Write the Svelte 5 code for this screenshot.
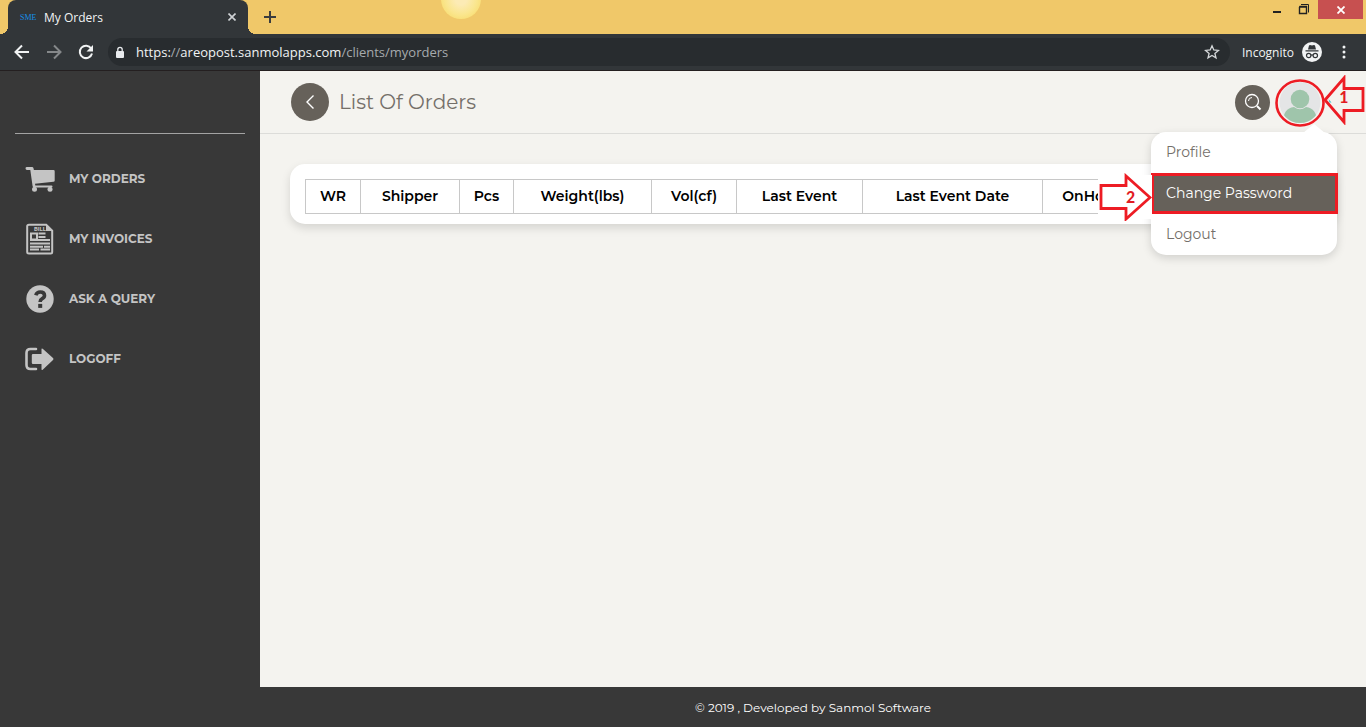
<script>
  const nav = ['MY ORDERS', 'MY INVOICES', 'ASK A QUERY', 'LOGOFF'];
  const columns = [
    { label: 'WR', width: 55 },
    { label: 'Shipper', width: 99 },
    { label: 'Pcs', width: 54 },
    { label: 'Weight(lbs)', width: 138 },
    { label: 'Vol(cf)', width: 85 },
    { label: 'Last Event', width: 126 },
    { label: 'Last Event Date', width: 180 },
    { label: 'OnHold', width: 95 },
    { label: '', width: 0 }
  ];
</script>

<div class="window">
  <header class="browser">
    <div class="tabstrip">
      <div class="sun"></div>
      <div class="tab">
        <span class="favicon">SME</span>
        <span class="tab-title">My Orders</span>
        <button class="plain" aria-label="Close tab">
          <svg width="8" height="8" viewBox="0 0 8 8"><path d="M.5.5l7 7M7.500.5l-7 7" stroke="#d0d3d6" stroke-width="1.600" /></svg>
        </button>
      </div>
      <button class="plain newtab" aria-label="New tab">
        <svg width="12" height="12" viewBox="0 0 12 12"><path d="M6 0v12M0 6h12" stroke="#3a3c3e" stroke-width="2" /></svg>
      </button>
      <div class="controls">
        <button class="plain minimise" aria-label="Minimize"><svg width="10" height="18" viewBox="0 0 10 18"><path d="M1 12h8" stroke="#222" stroke-width="2" /></svg></button>
        <button class="plain restore" aria-label="Restore"><svg width="12" height="18" viewBox="0 0 12 18" fill="none" stroke="#222"><path d="M3 4.500h7.500v8" /><path d="M1.500 7v6.500h7v-7h-7M1 7h8" stroke-width="1.400" /></svg></button>
        <button class="plain close" aria-label="Close"><svg width="8" height="8" viewBox="0 0 8 8"><path d="M.5.5l7 7M7.500.5l-7 7" stroke="#fff" stroke-width="1.800" /></svg></button>
      </div>
    </div>
    <div class="toolbar">
      <button class="plain" aria-label="Back"><svg width="16" height="16" viewBox="0 0 16 16" fill="none" stroke="#f1f3f4" stroke-width="2"><path d="M15 8H2M8 1.500L1.500 8L8 14.500" /></svg></button>
      <button class="plain" aria-label="Forward"><svg width="16" height="16" viewBox="0 0 16 16" fill="none" stroke="#85888a" stroke-width="2"><path d="M1 8h13M8 1.500L14.500 8L8 14.500" /></svg></button>
      <button class="plain" aria-label="Reload"><svg width="16" height="16" viewBox="0 0 16 16"><path d="M13.200 4.500A6.200 6.200 0 1 0 14 9.500" fill="none" stroke="#f1f3f4" stroke-width="2" /><path d="M15 1v6.500H8.500z" fill="#f1f3f4" /></svg></button>
      <div class="omnibox">
        <svg width="10" height="13" viewBox="0 0 10 13"><rect x="1" y="5" width="8" height="7" rx="1" fill="#e8eaed" /><path d="M2.800 5.500V3.500a2.200 2.200 0 0 1 4.400 0v2" fill="none" stroke="#e8eaed" stroke-width="1.300" /></svg>
        <span class="url">https:<span class="dim">//</span>areopost.sanmolapps.com<span class="dim">/clients/myorders</span></span>
        <button class="plain" aria-label="Bookmark"><svg width="16" height="16" viewBox="0 0 16 16"><path d="M8 1.800l1.800 4.200 4.600.4-3.500 3 1.100 4.500L8 11.500l-4 2.400 1.100-4.500-3.500-3 4.600-.4z" fill="none" stroke="#d5d8da" stroke-width="1.300" /></svg></button>
      </div>
      <div class="incognito">
        <span>Incognito</span>
        <svg width="20" height="20" viewBox="0 0 20 20"><circle cx="10" cy="10" r="10" fill="#f1f3f4" /><path d="M7 3.500l1-.5 2 .6 2-.6 1 .5 1 4H6zM3.500 8.300h13v1.200h-13z" fill="#323639" /><g fill="none" stroke="#323639" stroke-width="1.200"><circle cx="6.700" cy="13.500" r="2.200" /><circle cx="13.300" cy="13.500" r="2.200" /><path d="M8.800 13.200q1.200-.8 2.400 0" /></g></svg>
      </div>
      <button class="plain" aria-label="Menu"><svg width="4" height="14" viewBox="0 0 4 14" fill="#f1f3f4"><circle cx="2" cy="2" r="1.500" /><circle cx="2" cy="7" r="1.500" /><circle cx="2" cy="12" r="1.500" /></svg></button>
    </div>
  </header>

  <div class="body">
    <aside>
      <div class="brand"></div>
      <nav>
        {#each nav as item, i}
          <a href="#{item.toLowerCase().replaceAll(' ', '-')}">
            {#if i === 0}
              <svg width="30" height="30" viewBox="0 0 30 30"><path d="M.5 4.300Q.5 3 2 3h5q1.200 0 1.500 1.200l.4 1.800H28.500q1.200 0 1.200 1.200v9.200q0 1.200-1.300 1.400L10 19.800l.3 1.800H26.500q1 0 1 1t-1 1H9.200q-1.300 0-1.600-1.300L5.300 6H2Q.5 5.800.5 4.300z" fill="#c4c4c4" /><circle cx="9.500" cy="25.300" r="2.500" fill="#c4c4c4" /><circle cx="25" cy="25.300" r="2.500" fill="#c4c4c4" /></svg>
            {:else if i === 1}
              <svg width="30" height="32" viewBox="0 0 30 32"><path d="M4 1.700h17.200l6 6v21.500q0 1.300-1.300 1.300H4q-1.800 0-1.800-1.500V3.200q0-1.500 1.800-1.500z" fill="none" stroke="#c4c4c4" stroke-width="2" /><path d="M21 1l7 7h-7z" fill="#c4c4c4" /><text x="9" y="8.300" font-size="6" font-weight="700" font-family="Roboto, sans-serif" fill="#c4c4c4">BILL</text><path d="M5 9.500h8v8H5z" fill="#c4c4c4" /><path d="M7 11.500h4v4H7z" fill="#383838" /><path d="M13.500 10.500h7M13.500 14h7M5 17h20M5 20.500h20M5 23.700h13M19 23.700h6M5 26.500h9M15.500 26.500h9.500" stroke="#c4c4c4" stroke-width="2" /></svg>
            {:else if i === 2}
              <svg width="30" height="30" viewBox="0 0 30 30"><circle cx="15" cy="15" r="13.700" fill="#c4c4c4" /><path d="M10.800 11.300Q11.800 8 15.200 8q4.300 0 4.300 3.400 0 2-2.300 3.200-2 1.100-2 3v.4" fill="none" stroke="#383838" stroke-width="3.600" /><path d="M13.200 19.900h4v4h-4z" fill="#383838" /></svg>
            {:else}
              <svg width="30" height="30" viewBox="0 0 30 30"><path d="M11 5H5.500Q1.500 5 1.500 9v12q0 4 4 4H11" fill="none" stroke="#c4c4c4" stroke-width="2.600" stroke-linecap="round" /><path d="M8 10h8.500V5.200q0-1.300 1.200-.4L28 14q1 1 0 2l-10.300 9.800q-1.200.8-1.200-.5V20H8q-1.200 0-1.200-1.200v-7.600Q6.800 10 8 10z" fill="#c4c4c4" /></svg>
            {/if}
            <span>{item}</span>
          </a>
        {/each}
      </nav>
    </aside>

    <div class="content">
      <div class="pagehead">
        <button class="round back" aria-label="Go back"><svg width="10" height="16" viewBox="0 0 10 16"><path d="M8.500 1.500L2 8l6.500 6.500" fill="none" stroke="#fff" stroke-width="1.400" /></svg></button>
        <h1>List Of Orders</h1>
        <button class="round search" aria-label="Search"><svg width="18" height="18" viewBox="0 0 18 18" fill="none" stroke="#fff"><circle cx="8" cy="8" r="6.500" stroke-width="1.300" /><path d="M4.500 8A3.500 3.500 0 0 1 8 4.500" /><path d="M13 13l3.500 3.500" stroke-width="2" /></svg></button>
        <div class="account">
          <button class="plain" aria-label="Account">
            <svg width="50" height="50" viewBox="0 0 50 50"><defs><clipPath id="face"><circle cx="25" cy="25.500" r="20.500" /></clipPath></defs><circle cx="25" cy="25.500" r="20.500" fill="#e4e5e6" /><g clip-path="url(#face)" fill="#9fc5ab"><circle cx="25" cy="22" r="9.300" /><path d="M8 46q0-15 11-16 6 4.500 12 0 11 1 11 16z" /></g><ellipse cx="25" cy="26" rx="23.500" ry="22.500" fill="none" stroke="#ed1c24" stroke-width="2.600" /></svg>
          </button>
          <div class="menu">
            <a href="#profile">Profile</a>
            <a href="#change-password" class="active">Change Password</a>
            <a href="#logout">Logout</a>
            <div class="callout two"><svg width="54" height="48" viewBox="0 0 54 48"><path d="M0 2h54v44H0z" fill="#fff" /><path d="M3 12.500h25V3l24 21.500L28 46V35.500H3z" fill="#fff" stroke="#ed1c24" stroke-width="2.800" /></svg><b>2</b></div>
          </div>
          <div class="callout one"><svg width="42" height="50" viewBox="0 0 42 50"><path d="M5 22l4 4-4 2z" fill="#35c2cf" /><path d="M2 25L21 3v10.500h19v22H21V47z" fill="#f4f3ef" stroke="#ed1c24" stroke-width="2.800" /><path d="M5.500 24l3 3.500h-2z" fill="#35c2cf" /></svg><b>1</b></div>
        </div>
      </div>

      <main>
        <div class="card">
          <table>
            <colgroup>
              {#each columns as c}<col style={c.width ? `width: ${c.width}px` : ''} />{/each}
            </colgroup>
            <thead><tr>{#each columns as c}<th scope="col">{c.label}</th>{/each}</tr></thead>
          </table>
        </div>
      </main>

      <footer>© 2019 , Developed by Sanmol Software</footer>
    </div>
  </div>
</div>

<style>
  :global(body) { margin: 0; }
  .window { display: flex; flex-direction: column; min-height: 100vh; font-family: Montserrat, Inter, sans-serif; color: #000; }
  .window * { box-sizing: border-box; }
  svg { display: block; flex: none; }
  a { text-decoration: none; }
  .plain { border: 0; padding: 0; background: none; display: flex; align-items: center; justify-content: center; }

  .browser { font-family: "Segoe UI", "Open Sans", sans-serif; border-bottom: 1px solid #241f20; background: #323639; color: #f1f3f4; }
  .tabstrip { position: relative; display: flex; height: 34px; padding-left: 8px; background: #f0c869; overflow: hidden; }
  .sun { position: absolute; left: 441px; top: -21px; width: 40px; height: 40px; border-radius: 50%; background: radial-gradient(circle, #fcebb5 20%, #fae68e 55%, #f7d65a); }
  .tab { position: relative; display: flex; align-items: center; width: 240px; padding: 0 12px; background: #323639; border-radius: 8px 8px 0 0; }
  .tab::before, .tab::after { content: ""; position: absolute; bottom: 0; width: 8px; height: 8px; }
  .tab::before { left: -8px; background: radial-gradient(circle at 0 0, transparent 8px, #323639 8px); }
  .tab::after { right: -8px; background: radial-gradient(circle at 100% 0, transparent 8px, #323639 8px); }
  .favicon { width: 24px; font: 8px "Liberation Serif", serif; color: #1490e8; }
  .tab-title { flex: 1; font-size: 12px; }
  .newtab { margin-left: 16px; }
  .controls { display: flex; align-items: flex-start; margin-left: auto; padding-right: 3px; }
  .minimise { margin-right: 16px; }
  .restore { margin-right: 8px; }
  .close { width: 45px; height: 19px; background: #c75050; }
  .toolbar { display: flex; align-items: center; gap: 16px; height: 36px; padding: 0 20px 0 14px; }
  .omnibox { flex: 1; display: flex; align-items: center; height: 28px; padding: 0 10px 0 7px; margin-left: -2px; border-radius: 14px; background: #282c2f; font-size: 13px; }
  .url { flex: 1; margin-left: 11px; }
  .dim { color: #a6aaad; }
  .incognito { display: flex; align-items: center; gap: 8px; margin: 0 4px 0 -4px; font-size: 12px; }

  .body { flex: 1; display: flex; }
  aside { width: 260px; flex: none; padding: 0 15px; background: #383838; }
  .brand { height: 63px; border-bottom: 1px solid #a3a3a3; }
  nav { padding-top: 15px; }
  nav a { display: flex; align-items: center; gap: 14px; height: 60px; padding-left: 10px; font-size: 12px; font-weight: 700; color: #c4c4c4; }
  nav span { padding-bottom: 2px; }
  .content { flex: 1; min-width: 0; display: flex; flex-direction: column; background: #f4f3ef; }
  .pagehead { display: flex; align-items: center; height: 63px; padding: 0 41px 0 31px; border-bottom: 1px solid #dcdcd9; }
  .round { display: flex; align-items: center; justify-content: center; border: 0; padding: 0; border-radius: 50%; background: #66615a; }
  .back { width: 38px; height: 38px; }
  .search { width: 35px; height: 35px; margin-right: 5px; }
  h1 { flex: 1; margin: 0 0 0 10px; font-size: 20px; font-weight: 400; color: #746f69; }
  .account { position: relative; z-index: 1; }
  .menu { position: absolute; right: -12px; top: 55px; width: 186px; border-radius: 15px; background: #fff; box-shadow: 0 3px 10px rgba(0, 0, 0, .15); }
  .menu::before { content: ""; position: absolute; right: 12px; top: -8px; border: 11px solid transparent; border-top: 0; border-bottom: 9px solid #fff; }
  .menu a { display: flex; align-items: center; height: 41px; padding: 0 15px 2px; font-size: 14px; font-weight: 400; color: #746f69; }
  .menu .active { margin: 0 -1px 0 0; padding: 0 12px 2px; border: 3px solid #ed1c24; background: #66615a; color: #fff; }
  .callout { position: absolute; font-family: Calibri, "Open Sans", sans-serif; color: #e21c24; }
  .callout b { position: absolute; font-size: 18px; line-height: 24px; }
  .one { left: 48px; top: -2px; }
  .one b { left: 16px; top: 10px; }
  .two { left: -53px; top: 41px; }
  .two b { left: 28px; top: 12px; }
  main { flex: 1; padding: 30px 29px 0 30px; }
  .card { padding: 15px 15px 10px; border-radius: 15px; background: #fff; box-shadow: 0 4px 10px rgba(0, 0, 0, .13); }
  table { width: 100%; table-layout: fixed; border-collapse: collapse; }
  th { height: 34px; padding: 0 0 2px; border: 1px solid #c8c8c8; font-size: 14px; font-weight: 600; }
  footer { display: flex; align-items: center; justify-content: center; height: 40px; background: #383838; color: #fff; font-size: 12px; }
</style>
